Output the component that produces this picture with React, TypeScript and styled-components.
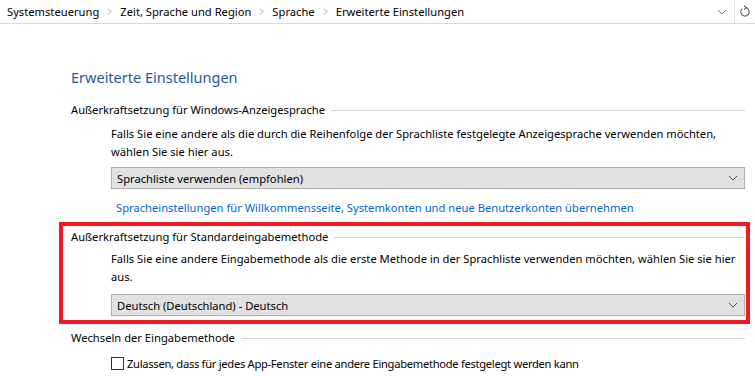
import React from 'react';
import styled, { createGlobalStyle } from 'styled-components';

const GlobalStyle = createGlobalStyle`
  html, body {
    margin: 0;
    padding: 0;
    background: #ffffff;
    font-family: "Noto Sans", "Open Sans", sans-serif;
    font-size: 11.2px;
    color: #000000;
    overflow: hidden;
  }
`

const AddressBar = styled.div`
  display: flex;
  align-items: center;
  height: 23px;
  border-bottom: 1px solid #d9d9d9;
  padding-left: 7px;
`
const Crumbs = styled.div`
  flex: 1;
  display: flex;
  align-items: center;
  gap: 8px;
  white-space: nowrap;
`
const BarButton = styled.div<{ $divider?: boolean; $w: number }>`
  width: ${(p) => p.$w}px;
  height: 23px;
  display: flex;
  align-items: center;
  justify-content: center;
  border-left: ${(p) => (p.$divider ? '1px solid #e3e3e3' : 'none')};
`

const Page = styled.div`
  padding: 0 10px 0 71px;
`
const Title = styled.h1`
  margin: 43px 0 0 0;
  font-size: 14.5px;
  font-weight: 400;
  color: #1e5aa0;
  line-height: 20px;
`
const Section = styled.div<{ $top: number }>`
  margin-top: ${(p) => p.$top}px;
`
const Highlight = styled.div`
  margin: 5px -5px 0 -12px;
  padding: 1px 1px 4px 8px;
  border: 4px solid #ed1c24;
`
const HeaderRow = styled.div`
  display: flex;
  align-items: center;
  gap: 6px;
  line-height: 20px;
  white-space: nowrap;
  &::after {
    content: '';
    flex: 1;
    height: 1px;
    background: #d4d4d4;
  }
`
const Body = styled.div<{ $top: number }>`
  padding-left: 40px;
  margin-top: ${(p) => p.$top}px;
`
const Text = styled.p`
  margin: 0;
  line-height: 18px;
  white-space: nowrap;
`
const Select = styled.div<{ $top: number }>`
  margin-top: ${(p) => p.$top}px;
  height: 20px;
  border: 1px solid #adadad;
  background: #e1e1e1;
  display: flex;
  align-items: center;
  padding: 0 6px 0 5px;
  justify-content: space-between;
`
const Link = styled.a`
  display: block;
  margin: 10px 0 0 5px;
  color: #0066cc;
  text-decoration: none;
  line-height: 18px;
`
const CheckRow = styled.label`
  display: flex;
  align-items: center;
  gap: 3px;
  margin-top: 8px;
  letter-spacing: -0.3px;
`
const Box = styled.span`
  width: 11px;
  height: 11px;
  border: 1px solid #333333;
  background: #ffffff;
`

const Chevron = ({ color = '#555' }: { color?: string }) => (
  <svg width="10" height="6" viewBox="0 0 10 6">
    <path d="M1 1 L5 5 L9 1" fill="none" stroke={color} strokeWidth="1" />
  </svg>
)

const Sep = () => (
  <svg width="5" height="7" viewBox="0 0 5 7">
    <path d="M1 0.5 L4 3.5 L1 6.5" fill="none" stroke="#a0a0a0" strokeWidth="1" />
  </svg>
)

const crumbs = ['Systemsteuerung', 'Zeit, Sprache und Region', 'Sprache', 'Erweiterte Einstellungen']

export default function App() {
  return <>
    <GlobalStyle />
    <AddressBar>
      <Crumbs>
        {crumbs.map((c, i) => <React.Fragment key={c}>
          {i > 0 && <Sep />}
          <span>{c}</span>
        </React.Fragment>)}
      </Crumbs>
      <BarButton $w={25}><Chevron color="#777" /></BarButton>
      <BarButton $divider $w={20}>
        <svg width="12" height="13" viewBox="0 0 12 13">
          <path d="M3.2 3.6 A4.2 4.2 0 1 0 6 2.6" fill="none" stroke="#666" strokeWidth="1.2" />
          <path d="M5 0.6 L7.2 2.6 L5 4.6" fill="none" stroke="#666" strokeWidth="1.2" />
        </svg>
      </BarButton>
    </AddressBar>

    <Page>
      <Title>Erweiterte Einstellungen</Title>

      <Section $top={13}>
        <HeaderRow>Außerkraftsetzung für Windows-Anzeigesprache</HeaderRow>
        <Body $top={5}>
          <Text>
            Falls Sie eine andere als die durch die Reihenfolge der Sprachliste festgelegte Anzeigesprache verwenden möchten,<br />
            wählen Sie sie hier aus.
          </Text>
          <Select $top={6}>
            <span>Sprachliste verwenden (empfohlen)</span>
            <Chevron />
          </Select>
          <Link>Spracheinstellungen für Willkommensseite, Systemkonten und neue Benutzerkonten übernehmen</Link>
        </Body>
      </Section>

      <Highlight>
        <HeaderRow>Außerkraftsetzung für Standardeingabemethode</HeaderRow>
        <Body $top={3}>
          <Text>
            Falls Sie eine andere Eingabemethode als die erste Methode in der Sprachliste verwenden möchten, wählen Sie sie hier<br />
            aus.
          </Text>
          <Select $top={8}>
            <span>Deutsch (Deutschland) - Deutsch</span>
            <Chevron />
          </Select>
        </Body>
      </Highlight>

      <Section $top={4}>
        <HeaderRow>Wechseln der Eingabemethode</HeaderRow>
        <Body $top={3}>
          <CheckRow>
            <Box />
            <span>Zulassen, dass für jedes App-Fenster eine andere Eingabemethode festgelegt werden kann</span>
          </CheckRow>
        </Body>
      </Section>
    </Page>
  </>
}
